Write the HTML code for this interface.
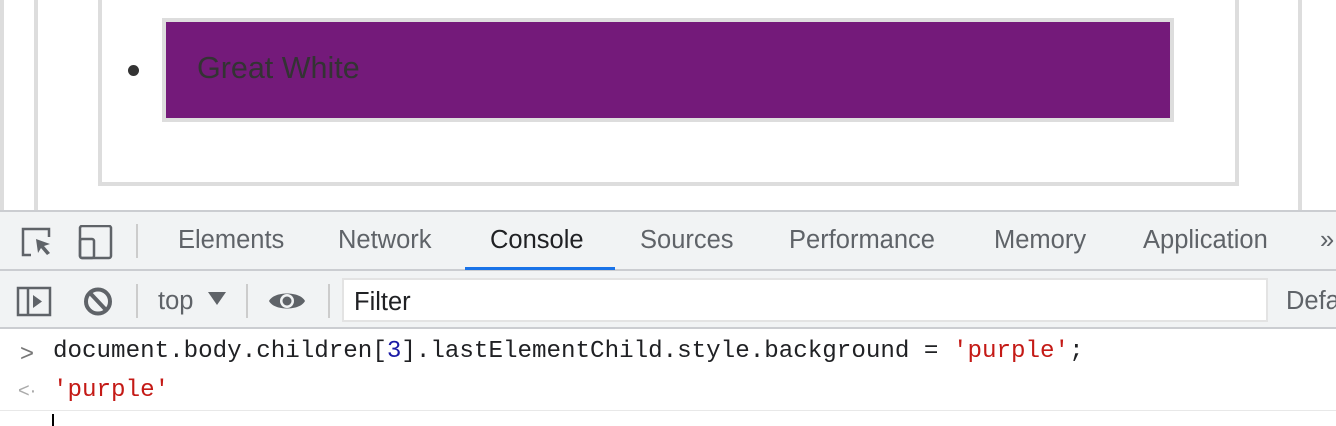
<!DOCTYPE html>
<html><head><style>
*{margin:0;padding:0;box-sizing:border-box}
body{width:1336px;height:426px;overflow:hidden;background:#fff;font-family:"Liberation Sans",sans-serif;position:relative}
.a{position:absolute}
.tab{position:absolute;top:226px;font-size:25.5px;color:#5f6368}
.mono{font-family:"Liberation Mono",monospace;font-size:24.2px;color:#202124}
</style></head><body>
<div class="a" style="left:0;top:0;width:4px;height:210px;background:#ddd"></div>
<div class="a" style="left:34px;top:0;width:4px;height:210px;background:#ddd"></div>
<div class="a" style="left:1298px;top:0;width:4px;height:210px;background:#ddd"></div>
<div class="a" style="left:98px;top:-10px;width:1141px;height:196px;border:4px solid #ddd"></div>
<div class="a" style="left:128px;top:65px;width:11px;height:11px;border-radius:50%;background:#333"></div>
<div class="a" style="left:162px;top:18px;width:1012px;height:104px;border:4px solid #ddd;background:#741a7a"></div>
<div class="a" style="left:197px;top:51px;font-size:30.5px;color:#333">Great White</div>

<div class="a" style="left:0;top:210px;width:1336px;height:61px;background:#f1f3f4;border-top:2px solid #cbcdd1;border-bottom:2px solid #cbcdd1"></div>
<svg class="a" style="left:20px;top:225px" width="100" height="36" viewBox="0 0 100 36" fill="none" stroke="#5f6368" stroke-width="2.5">
<path d="M11 30H3V4h26v8"/><path d="M16 14l14 5-6 2 6 7-3 2-6-7-3 5z" fill="#5f6368" stroke="none"/>
<rect x="60" y="1" width="31" height="32" rx="2"/><rect x="60" y="14" width="14" height="19" rx="2"/>
</svg>
<div class="a" style="left:136px;top:224px;width:2px;height:34px;background:#ccc"></div>
<div class="tab" style="left:178px">Elements</div>
<div class="tab" style="left:338px">Network</div>
<div class="tab" style="left:490px;color:#202124">Console</div>
<div class="a" style="left:465px;top:267px;width:150px;height:3px;background:#1a73e8"></div>
<div class="tab" style="left:640px">Sources</div>
<div class="tab" style="left:789px">Performance</div>
<div class="tab" style="left:994px">Memory</div>
<div class="tab" style="left:1143px">Application</div>
<div class="tab" style="left:1320px">»</div>

<div class="a" style="left:0;top:271px;width:1336px;height:58px;background:#f1f3f4;border-bottom:2px solid #cbcdd1"></div>
<svg class="a" style="left:16px;top:286px" width="100" height="32" viewBox="0 0 100 32" fill="none" stroke="#5f6368" stroke-width="2.5">
<rect x="2" y="2" width="32" height="27"/><path d="M12 2v27"/><path d="M17 9l9 6.5-9 6.5z" fill="#5f6368" stroke="none"/>
<circle cx="82" cy="15.5" r="12" stroke-width="4"/><path d="M74 7l16 17" stroke-width="4"/>
</svg>
<div class="a" style="left:136px;top:284px;width:2px;height:34px;background:#ccc"></div>
<div class="a" style="left:158px;top:287px;font-size:25.5px;color:#5f6368">top</div>
<svg class="a" style="left:208px;top:292px" width="18" height="14"><path d="M0 0h18L9 13z" fill="#5f6368"/></svg>
<div class="a" style="left:246px;top:284px;width:2px;height:34px;background:#ccc"></div>
<svg class="a" style="left:268px;top:288px" width="38" height="26" viewBox="0 0 38 26"><path d="M1 13C6 3 32 3 37 13C32 23 6 23 1 13z" fill="#5f6368"/><circle cx="19" cy="13" r="7" fill="#f1f3f4"/><circle cx="19" cy="13" r="4.5" fill="#5f6368"/></svg>
<div class="a" style="left:328px;top:284px;width:2px;height:34px;background:#ccc"></div>
<div class="a" style="left:342px;top:278px;width:926px;height:44px;background:#fff;border:2px solid #e3e3e3"></div>
<div class="a" style="left:354px;top:288px;font-size:25.5px;color:#202124">Filter</div>
<div class="a" style="left:1286px;top:287px;font-size:25.5px;color:#5f6368">Defa</div>

<div class="a" style="left:20px;top:340px;font-size:24px;color:#777">&gt;</div>
<div class="a mono" style="left:53px;top:338px">document.body.children[<span style="color:#1a1aa6">3</span>].lastElementChild.style.background = <span style="color:#c41a16">'purple'</span>;</div>
<div class="a" style="left:18px;top:380px;font-size:20px;color:#aaa">&lt;·</div>
<div class="a mono" style="left:53px;top:377px;color:#c41a16">'purple'</div>
<div class="a" style="left:0;top:410px;width:1336px;height:1px;background:#e8e8e8"></div>
<div class="a" style="left:52px;top:414px;width:2px;height:12px;background:#000"></div>
</body></html>
